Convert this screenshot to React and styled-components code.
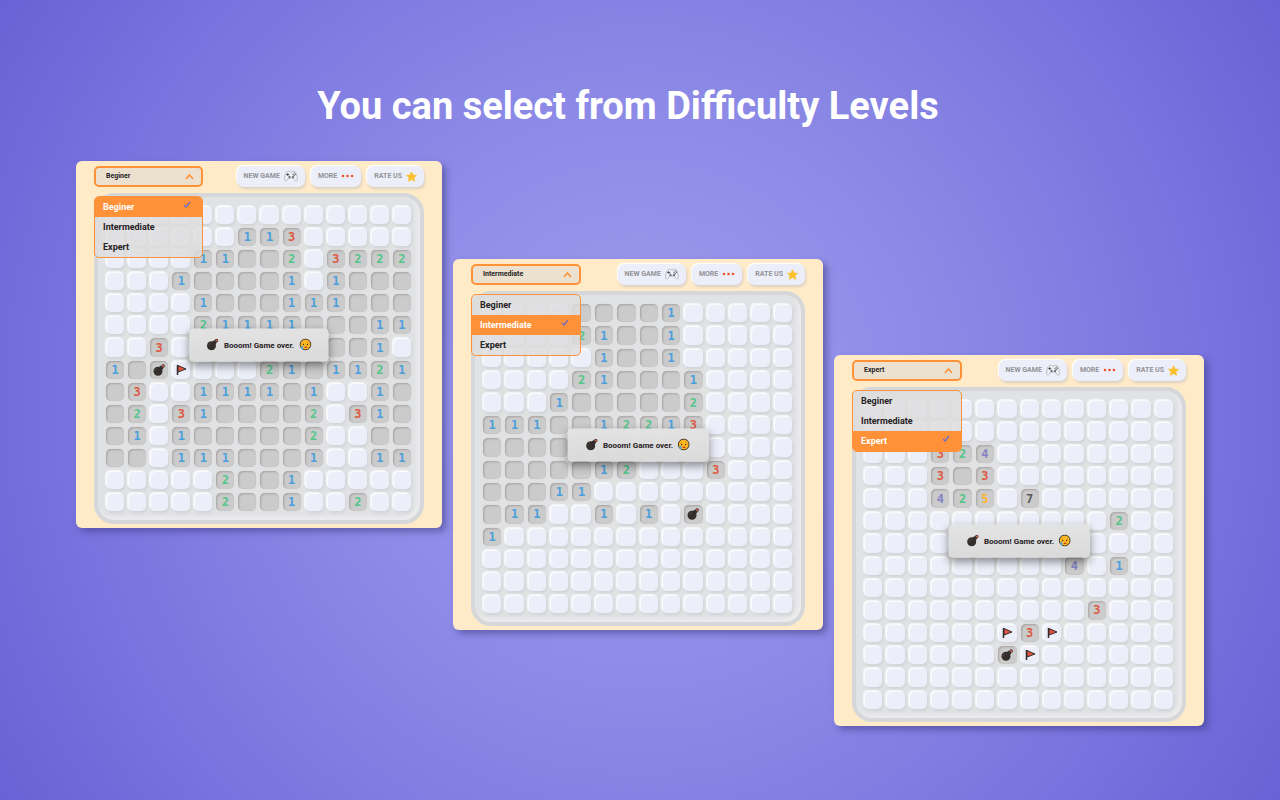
import { useState } from 'react';
import styled, { createGlobalStyle, css } from 'styled-components';

const COLORS = {
  cream: '#ffebc8',
  orange: '#ff9238',
  cell: '#eceef9',
  open: '#cbcbcb',
  board: '#e1e2e4',
  ink: '#26211f',
};

const BASE_FONT = "Roboto, 'Liberation Sans', sans-serif";
const MONO_FONT = "'DejaVu Sans Mono', 'Liberation Mono', monospace";

const NUMBER_COLORS = {
  1: '#4a9fdc',
  2: '#55c58a',
  3: '#de5a43',
  4: '#8583c6',
  5: '#fdb52f',
  7: '#5a5a5a',
};

const LEVELS = ['Beginer', 'Intermediate', 'Expert'];

// # closed, . open and empty, F flag, B bomb
const GAMES = [
  {
    level: 'Beginer',
    drop: 0,
    rows: [
      '##############',
      '######113#####',
      '####11..2#3222',
      '###1....1#1...',
      '####1...111...',
      '####21111...11',
      '##3#........1#',
      '1.BF###21.1121',
      '.3##1111.1##1.',
      '.2#31....2#31.',
      '.1#1.....2##..',
      '..#111...1##11',
      '#####2..1#####',
      '#####2..1##2##',
    ],
  },
  {
    level: 'Intermediate',
    drop: 98,
    rows: [
      '####....1#####',
      '####21..1#####',
      '#####1..1#####',
      '####21...1####',
      '###1.....2####',
      '111..12213####',
      '.........#####',
      '.....12###3###',
      '...11#########',
      '.11##1#1#B####',
      '1#############',
      '##############',
      '##############',
      '##############',
    ],
  },
  {
    level: 'Expert',
    drop: 194,
    rows: [
      '##############',
      '##############',
      '###324########',
      '###3.3########',
      '###425#7######',
      '###########2##',
      '##############',
      '#########4#1##',
      '##############',
      '##########3###',
      '######F3F#####',
      '######BF######',
      '##############',
      '##############',
    ],
  },
];

const GlobalStyle = createGlobalStyle`
  * {
    box-sizing: border-box;
  }

  body {
    margin: 0;
    font-family: ${BASE_FONT};
    background: #6a63d6;
  }

  button,
  select {
    margin: 0;
    padding: 0;
    border: 0;
    font-family: inherit;
    cursor: pointer;
  }
`;

const Page = styled.main`
  min-height: 100vh;
  padding: 84px 76px 64px;
  background: radial-gradient(circle at center, #9e9dee 0%, #8c8ae6 40%, #7a75df 72%, #6862d6 100%);
`;

const Title = styled.h1`
  margin: 0 24px 33px 0;
  color: #fff;
  font-size: 38px;
  font-weight: 700;
  line-height: 44px;
  text-align: center;
`;

const Gallery = styled.div`
  display: grid;
  grid-template-columns: 366fr 370fr 370fr;
  align-items: start;
  gap: 11px;
`;

const Panel = styled.section`
  position: relative;
  margin-top: ${({ $drop }) => $drop}px;
  padding: 4px 18px;
  border-radius: 6px;
  background: ${COLORS.cream};
  box-shadow: 4px 4px 6px rgba(60, 55, 130, 0.5);
`;

const Toolbar = styled.header`
  display: flex;
  justify-content: space-between;
  align-items: center;
  height: 22px;
`;

const Picker = styled.div`
  position: relative;
  width: 33%;
`;

const PickerSelect = styled.select`
  display: block;
  width: 100%;
  height: 21px;
  padding: 0 10px;
  appearance: none;
  border: 2px solid ${COLORS.orange};
  border-radius: 5px;
  background: #ebe1ce;
  color: ${COLORS.ink};
  font-size: 7px;
  font-weight: 700;
`;

const Chevron = styled.svg`
  position: absolute;
  top: 7px;
  right: 9px;
  width: 9px;
  height: 7px;
  pointer-events: none;
`;

const Options = styled.ul`
  position: absolute;
  top: 30px;
  left: 0;
  z-index: 2;
  width: 100%;
  margin: 0;
  padding: 0;
  overflow: hidden;
  list-style: none;
  border: 1px solid ${COLORS.orange};
  border-radius: 5px;
  background: rgba(221, 221, 221, 0.82);
`;

const Option = styled.button`
  display: flex;
  justify-content: space-between;
  width: 100%;
  height: 20px;
  padding: 0 11px 0 8px;
  align-items: center;
  background: transparent;
  color: ${COLORS.ink};
  font-size: 9px;
  font-weight: 700;

  ${({ $active }) =>
    $active &&
    css`
      background: ${COLORS.orange};
      color: #fff;
    `}

  svg {
    width: 8px;
    height: 7px;
    margin-bottom: 4px;
  }
`;

const Actions = styled.nav`
  display: flex;
  gap: 6px;
`;

const ActionButton = styled.button`
  display: flex;
  align-items: center;
  gap: 4px;
  height: 21px;
  padding: 0 7px;
  border-radius: 7px;
  background: ${COLORS.cell};
  box-shadow:
    -1px -1px 1px #fff,
    1px 2px 3px #d9cfc4;
  color: #939296;
  font-size: 7px;
  font-weight: 700;
`;

const Board = styled.div`
  display: grid;
  grid-template-columns: repeat(14, 1fr);
  gap: 4px;
  margin-top: 6px;
  padding: 9px 9px 9px 8px;
  border: 4px solid #d6d7d9;
  border-radius: 20px;
  background: ${COLORS.board};
  box-shadow: inset -3px -3px 4px #ededee;
`;

const Cell = styled.button`
  display: flex;
  justify-content: center;
  align-items: center;
  aspect-ratio: 1;
  min-width: 0;
  border-radius: 5px;
  background: ${COLORS.cell};
  box-shadow:
    inset 1px 1px 1px #fcfcfd,
    -1px -1px 1px #f6f7fa,
    1px 2px 3px #d2d3d6;
  font-family: ${MONO_FONT};
  font-size: 12px;
  font-weight: 700;
  line-height: 12px;

  ${({ $open }) =>
    $open &&
    css`
      background: ${COLORS.open};
      box-shadow:
        inset 1px 1px 2px #a8a3a3,
        0 0 2px #d6d6d8;
    `}

  color: ${({ $value }) => NUMBER_COLORS[$value] || COLORS.ink};

  svg {
    width: 12px;
    height: 12px;
  }
`;

const Message = styled.div`
  position: absolute;
  top: 50%;
  left: 50%;
  z-index: 1;
  display: flex;
  justify-content: center;
  align-items: center;
  gap: 5px;
  width: 38%;
  height: 33px;
  transform: translate(-50%, -50%);
  border-radius: 4px;
  background: linear-gradient(rgba(227, 227, 227, 0.98), rgba(218, 218, 218, 0.98));
  box-shadow: 0 4px 10px rgba(0, 0, 0, 0.45);
  color: ${COLORS.ink};
  font-size: 8px;
  font-weight: 700;

  svg {
    width: 12px;
    height: 12px;
  }
`;

function BombIcon() {
  return (
    <svg viewBox="0 0 24 24" aria-hidden="true">
      <circle cx="10" cy="14.5" r="9" fill="#332d2b" />
      <path d="M12 6l6 6 3-4-5-5z" fill="#332d2b" />
      <circle cx="20.3" cy="4" r="3.6" fill="#332d2b" />
      <circle cx="20.3" cy="4" r="2.2" fill="#e2604c" />
      <path d="M5 14c0-2.5 1.5-4 4-4.5" fill="none" stroke="#55504e" strokeWidth="1.5" />
    </svg>
  );
}

function FlagIcon() {
  return (
    <svg viewBox="0 0 24 24" aria-hidden="true">
      <path d="M5 2v20" stroke="#332d2b" strokeWidth="3" />
      <path d="M6 3l16 7-16 6z" fill="#e2543f" stroke="#332d2b" strokeWidth="2" strokeLinejoin="round" />
    </svg>
  );
}

function CryIcon() {
  return (
    <svg viewBox="0 0 24 24" aria-hidden="true">
      <circle cx="12" cy="12" r="10.8" fill="#ffb81f" stroke="#332d2b" strokeWidth="2" />
      <path d="M5.5 9.5l2.500-2M18.500 9.500l-2.500-2" stroke="#a5651c" strokeWidth="1.2" />
      <circle cx="8" cy="12" r="1.3" fill="#332d2b" />
      <circle cx="16" cy="12" r="1.3" fill="#332d2b" />
      <path d="M10.500 18c1-2 3.500-2 4.500 0z" fill="#b3261e" stroke="#b3261e" strokeWidth="1.2" />
      <path d="M6 14c-2 2-3 3.500-3 5 0 3 5 3 5 0 0-2-1-3-2-5z" fill="#4ea5e0" />
    </svg>
  );
}

function GamepadIcon() {
  return (
    <svg width="14" height="14" viewBox="0 0 28 28" fill="none" aria-hidden="true">
      <path
        d="M7 5c2-1 4-1 5 1h4c1-2 3-2 5-1 3 1 4 4 5 9 1 6 1 9-1 10-3 1-4-3-6-6h-10c-2 3-3 7-6 6-2-1-2-4-1-10 1-5 2-8 5-9z"
        fill="#f3f4fa"
        stroke="#a9a9b0"
        strokeWidth="1.5"
      />
      <path d="M7.5 8v6M4.5 11h6" stroke="#55555c" strokeWidth="2" />
      <circle cx="11" cy="16" r="2.4" fill="#77777e" />
      <circle cx="18" cy="16" r="2.4" fill="#77777e" />
      <circle cx="18" cy="10.5" r="1.3" fill="#55555c" />
      <circle cx="23" cy="10.5" r="1.3" fill="#55555c" />
      <circle cx="20.5" cy="8" r="1.3" fill="#77777e" />
      <circle cx="20.5" cy="13" r="1.3" fill="#55555c" />
    </svg>
  );
}

function DotsIcon() {
  return (
    <svg width="13" height="4" viewBox="0 0 13 4" fill="#f0542a" aria-hidden="true">
      <circle cx="2" cy="2" r="1.3" />
      <circle cx="6.5" cy="2" r="1.3" />
      <circle cx="11" cy="2" r="1.3" />
    </svg>
  );
}

function StarIcon() {
  return (
    <svg width="11" height="11" viewBox="0 0 24 24" aria-hidden="true">
      <path
        d="M12 1.5l3.2 7.2 7.8.8-5.8 5.2 1.7 7.8-6.9-4-6.9 4 1.7-7.8L1 9.5l7.8-.8z"
        fill="#fcc12d"
        stroke="#fcc12d"
        strokeWidth="1.5"
        strokeLinejoin="round"
      />
    </svg>
  );
}

function LevelPicker({ level, onChange }) {
  return (
    <Picker>
      <PickerSelect aria-label="Difficulty level" value={level} onChange={(e) => onChange(e.target.value)}>
        {LEVELS.map((name) => (
          <option key={name}>{name}</option>
        ))}
      </PickerSelect>
      <Chevron viewBox="0 0 9 7" aria-hidden="true">
        <path d="M1 6l3.5-4L8 6" fill="none" stroke={COLORS.orange} strokeWidth="1.5" />
      </Chevron>
      <Options>
        {LEVELS.map((name) => (
          <li key={name}>
            <Option type="button" $active={name === level} aria-pressed={name === level} onClick={() => onChange(name)}>
              {name}
              {name === level && (
                <svg viewBox="0 0 8 7" aria-hidden="true">
                  <path d="M1 4l2 2 4-5" fill="none" stroke="#6a6fc4" strokeWidth="1.3" />
                </svg>
              )}
            </Option>
          </li>
        ))}
      </Options>
    </Picker>
  );
}

function cellContent(value) {
  if (value === 'F') return <FlagIcon />;
  if (value === 'B') return <BombIcon />;
  return NUMBER_COLORS[value] ? value : null;
}

function Game({ game }) {
  const [level, setLevel] = useState(game.level);

  return (
    <Panel $drop={game.drop}>
      <Toolbar>
        <LevelPicker level={level} onChange={setLevel} />
        <Actions>
          <ActionButton type="button">
            NEW GAME <GamepadIcon />
          </ActionButton>
          <ActionButton type="button">
            MORE <DotsIcon />
          </ActionButton>
          <ActionButton type="button">
            RATE US <StarIcon />
          </ActionButton>
        </Actions>
      </Toolbar>
      <Board>
        {game.rows.map((row, y) =>
          row.split('').map((value, x) => (
            <Cell
              key={`${x}-${y}`}
              type="button"
              aria-label={`Row ${y + 1}, column ${x + 1}`}
              $open={value !== '#' && value !== 'F'}
              $value={value}
            >
              {cellContent(value)}
            </Cell>
          ))
        )}
      </Board>
      <Message role="status">
        <BombIcon />
        <span>Booom! Game over.</span>
        <CryIcon />
      </Message>
    </Panel>
  );
}

function App() {
  return (
    <>
      <GlobalStyle />
      <Page>
        <Title>You can select from Difficulty Levels</Title>
        <Gallery>
          {GAMES.map((game) => (
            <Game key={game.level} game={game} />
          ))}
        </Gallery>
      </Page>
    </>
  );
}

export default App;
